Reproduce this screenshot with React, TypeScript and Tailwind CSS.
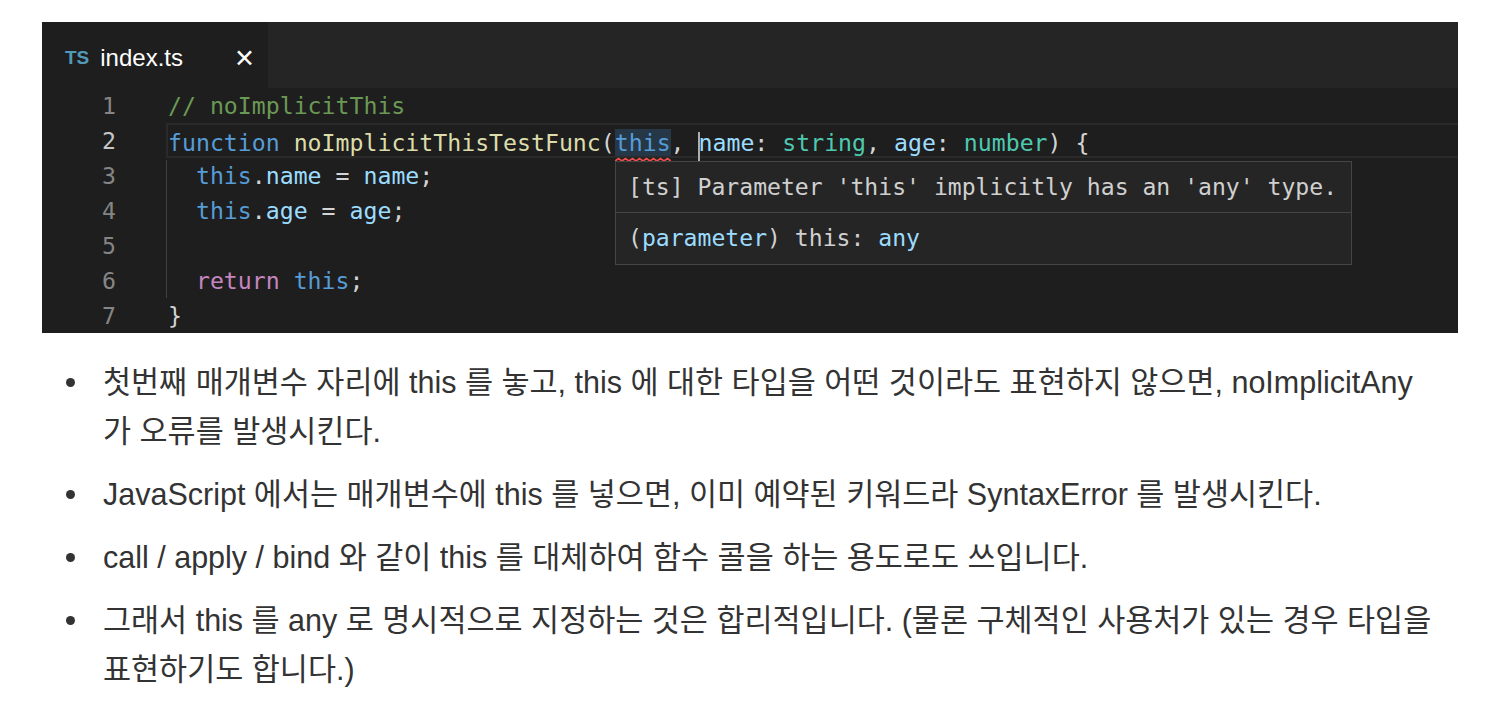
import React from "react";

const mono = { fontFamily: '"DejaVu Sans Mono", "Liberation Mono", monospace' };

const C = {
  kw: "text-[#569cd6]",
  fn: "text-[#dcdcaa]",
  vr: "text-[#9cdcfe]",
  ty: "text-[#4ec9b0]",
  ct: "text-[#6a9955]",
  rt: "text-[#c586c0]",
  tx: "text-[#d4d4d4]",
};

const Line = ({ children, active }: { children?: React.ReactNode; active?: boolean }) => (
  <div
    className={
      "h-[35px] leading-[35px] whitespace-pre " +
      (active ? "border-2 border-r-0 border-[#2a2a2a] leading-[31px]" : "pl-[2px]")
    }
  >
    {children}
  </div>
);

const bullets: string[] = [
  "첫번째 매개변수 자리에 this 를 놓고, this 에 대한 타입을 어떤 것이라도 표현하지 않으면, noImplicitAny 가 오류를 발생시킨다.",
  "JavaScript 에서는 매개변수에 this 를 넣으면, 이미 예약된 키워드라 SyntaxError 를 발생시킨다.",
  "call / apply / bind 와 같이 this 를 대체하여 함수 콜을 하는 용도로도 쓰입니다.",
  "그래서 this 를 any 로 명시적으로 지정하는 것은 합리적입니다. (물론 구체적인 사용처가 있는 경우 타입을 표현하기도 합니다.)",
];

export default function App() {
  return (
    <div className="min-h-[706px] w-[1502px] bg-white pt-[22px] pl-[42px]">
      <div className="w-[1416px] bg-[#1e1e1e]">
        {/* tab bar */}
        <div className="flex h-[66px] bg-[#252526]">
          <div
            className="flex w-[226px] items-center bg-[#1e1e1e] pl-[23px] pt-[6px]"
            style={{ fontFamily: '"Liberation Sans", sans-serif' }}
          >
            <span className="text-[19px] font-bold text-[#519aba]">TS</span>
            <span className="ml-[11px] text-[24px] text-white">index.ts</span>
            <span
              className="ml-[51px] text-[25px] font-bold leading-none text-white"
              style={{ fontFamily: '"DejaVu Sans", sans-serif' }}
            >
              ✕
            </span>
          </div>
        </div>

        {/* editor */}
        <div className="relative flex h-[245px] text-[23.2px]" style={mono}>
          <div className="w-[74px] text-right text-[#858585]">
            {[1, 2, 3, 4, 5, 6, 7].map((n) => (
              <div key={n} className={"h-[35px] leading-[35px] " + (n === 2 ? "text-[#c6c6c6]" : "")}>
                {n}
              </div>
            ))}
          </div>
          <div className="ml-[50px] flex-1 text-[#d4d4d4]">
            <Line>
              <span className={C.ct}>// noImplicitThis</span>
            </Line>
            <Line active>
              <span className={C.kw}>function</span> <span className={C.fn}>noImplicitThisTestFunc</span>(
              <span className={"relative bg-[#263747] " + C.kw}>
                this
                <svg className="absolute left-0 top-[28px]" width="56" height="6" viewBox="0 0 56 6">
                  <path
                    d="M0 4 L3.5 1.5 L7 4 L10.5 1.5 L14 4 L17.5 1.5 L21 4 L24.5 1.5 L28 4 L31.5 1.5 L35 4 L38.5 1.5 L42 4 L45.5 1.5 L49 4 L52.5 1.5 L56 4"
                    fill="none"
                    stroke="#f14c4c"
                    strokeWidth="1.6"
                  />
                </svg>
              </span>
              , <span className="relative">
                <span className="absolute left-[-1px] top-[3px] h-[31px] w-[2px] bg-[#aeafad]" />
                <span className={C.vr}>name</span>
              </span>
              : <span className={C.ty}>string</span>, <span className={C.vr}>age</span>:{" "}
              <span className={C.ty}>number</span>) {"{"}
            </Line>
            <Line>
              {"  "}
              <span className={C.kw}>this</span>.<span className={C.vr}>name</span> = <span className={C.vr}>name</span>;
            </Line>
            <Line>
              {"  "}
              <span className={C.kw}>this</span>.<span className={C.vr}>age</span> = <span className={C.vr}>age</span>;
            </Line>
            <Line />
            <Line>
              {"  "}
              <span className={C.rt}>return</span> <span className={C.kw}>this</span>;
            </Line>
            <Line>{"}"}</Line>
          </div>

          {/* indent guide */}
          <div className="absolute left-[124px] top-[72px] h-[138px] w-px bg-[#404040]" />

          {/* hover tooltip */}
          <div className="absolute left-[573px] top-[73px] w-[737px] border border-[#454545] bg-[#252526] text-[23.1px] text-[#d0d0d0]">
            <div className="h-[51px] whitespace-pre border-b border-[#454545] pl-[12px] leading-[50px]">
              [ts] Parameter 'this' implicitly has an 'any' type.
            </div>
            <div className="h-[51px] whitespace-pre pl-[12px] leading-[50px]">
              (<span className="text-[#9cdcfe]">parameter</span>) this: <span className="text-[#9cdcfe]">any</span>
            </div>
          </div>
        </div>
      </div>

      {/* bullets */}
      <ul
        className="mt-[25px] w-[1420px] text-[30.5px] leading-[49px] text-[#333333]"
        style={{ fontFamily: '"Liberation Sans", "Noto Sans CJK KR", sans-serif' }}
      >
        {bullets.map((b, i) => (
          <li key={i} className={"flex " + (i > 0 ? "mt-[14px]" : "")}>
            <span className="mt-[20px] ml-[24px] h-[9px] w-[9px] shrink-0 rounded-full bg-[#333333]" />
            <span className="ml-[28px] w-[1337px] break-keep">{b}</span>
          </li>
        ))}
      </ul>
    </div>
  );
}
